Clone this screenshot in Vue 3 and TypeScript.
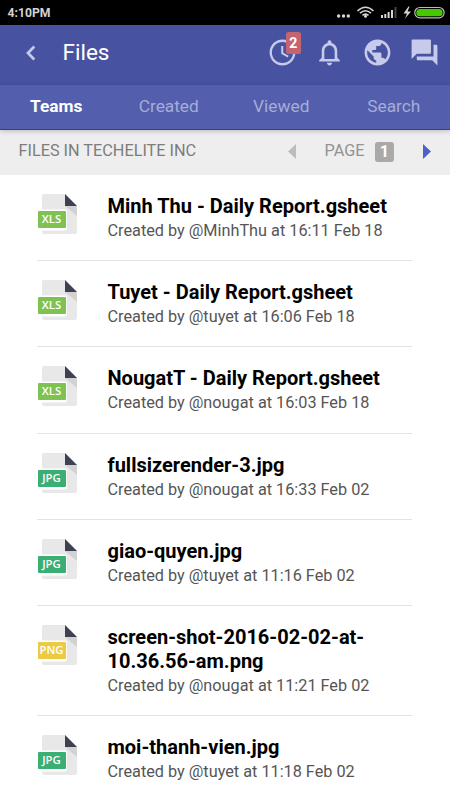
<script setup lang="ts">
interface FileItem {
  name: string
  user: string
  time: string
  type: 'xls' | 'jpg' | 'png'
}

const tabs: string[] = ['Teams', 'Created', 'Viewed', 'Search']
const activeTab = 'Teams'

const files: FileItem[] = [
  { name: 'Minh Thu - Daily Report.gsheet', user: 'MinhThu', time: '16:11 Feb 18', type: 'xls' },
  { name: 'Tuyet - Daily Report.gsheet', user: 'tuyet', time: '16:06 Feb 18', type: 'xls' },
  { name: 'NougatT - Daily Report.gsheet', user: 'nougat', time: '16:03 Feb 18', type: 'xls' },
  { name: 'fullsizerender-3.jpg', user: 'nougat', time: '16:33 Feb 02', type: 'jpg' },
  { name: 'giao-quyen.jpg', user: 'tuyet', time: '11:16 Feb 02', type: 'jpg' },
  { name: 'screen-shot-2016-02-02-at-10.36.56-am.png', user: 'nougat', time: '11:21 Feb 02', type: 'png' },
  { name: 'moi-thanh-vien.jpg', user: 'tuyet', time: '11:18 Feb 02', type: 'jpg' },
]
</script>

<template>
  <div class="screen">
    <div class="status">
      <span class="clock">4:10PM</span>
      <svg class="status-icons" viewBox="0 0 114 25" fill="#d6d6d6">
        <circle cx="2.600" cy="16" r="1.700" />
        <circle cx="7.500" cy="16" r="1.700" />
        <circle cx="12.300" cy="16" r="1.700" />
        <g fill="none" stroke="#d6d6d6" stroke-width="1.600">
          <path d="M21.500 11Q29.500 3.500 37.500 11" />
          <path d="M24 13.200Q29.500 8.300 35 13.200" />
          <path d="M26.500 15.400Q29.500 12.800 32.500 15.400" />
        </g>
        <circle cx="29.500" cy="16.300" r="1.500" />
        <path d="M45 15h2v3h-2zM48.300 14h2v4h-2zM51.600 12h2v6h-2zM55 10h2v8h-2z" />
        <path d="M58.500 7h2v11h-2z" fill="#444" />
        <path d="M72.500 6.500 67.500 13.500H71L69 18.500 75 11.500H71.500L73.500 6.500z" />
        <rect x="78.800" y="7.500" width="29.300" height="10.300" rx="5.100" fill="#050505" stroke="#bbb" stroke-width="1.200" />
        <rect x="80.300" y="9" width="26.300" height="7.300" rx="3.600" fill="#48c800" />
      </svg>
    </div>

    <header class="header">
      <svg class="back" viewBox="0 0 12 18"><path d="M9.300 2.500 3 9 9.300 15.500" /></svg>
      <h1>Files</h1>
      <nav class="actions">
        <span class="action clock-action">
          <svg viewBox="0 0 24 24"><path d="M11.990 2C6.470 2 2 6.480 2 12s4.470 10 9.990 10C17.520 22 22 17.520 22 12S17.520 2 11.990 2zM12 20.200c-4.530 0-8.200-3.670-8.200-8.200S7.470 3.800 12 3.800s8.200 3.670 8.200 8.200-3.670 8.200-8.200 8.200zM12.600 7H11v5.900l5 3 .8-1.300-4.200-2.500z" /></svg>
          <b class="badge">2</b>
        </span>
        <svg class="action" viewBox="0 0 24 24"><path d="M12 22c1.100 0 2-.9 2-2h-4c0 1.100.9 2 2 2zm6-6v-5c0-3.070-1.630-5.640-4.500-6.320V4c0-.83-.67-1.500-1.500-1.500s-1.500.67-1.500 1.500v.68C7.640 5.360 6 7.920 6 11v5l-2 2v1h16v-1l-2-2zm-2 1H8v-6c0-2.480 1.510-4.500 4-4.500s4 2.020 4 4.500v6z" /></svg>
        <svg class="action" viewBox="0 0 24 24"><path d="M12 2C6.480 2 2 6.480 2 12s4.480 10 10 10 10-4.480 10-10S17.520 2 12 2zm-1 17.930c-3.950-.49-7-3.850-7-7.930 0-.62.080-1.210.210-1.790L9 15v1c0 1.100.9 2 2 2v1.930zm6.900-2.540c-.26-.81-1-1.390-1.900-1.390h-1v-3c0-.55-.45-1-1-1H8v-2h2c.55 0 1-.45 1-1V7h2c1.100 0 2-.9 2-2v-.41c2.930 1.190 5 4.060 5 7.410 0 2.080-.8 3.970-2.100 5.390z" /></svg>
        <svg class="action" viewBox="0 0 24 24"><path d="M21 6h-2v9H6v2c0 .55.45 1 1 1h11l4 4V7c0-.55-.45-1-1-1zm-4 6V3c0-.55-.45-1-1-1H3c-.55 0-1 .45-1 1v14l4-4h10c.55 0 1-.45 1-1z" /></svg>
      </nav>
    </header>

    <nav class="tabs">
      <span v-for="tab in tabs" :key="tab" class="tab" :class="{ active: tab === activeTab }">{{ tab }}</span>
    </nav>

    <div class="subbar">
      <span class="group">FILES IN TECHELITE INC</span>
      <svg class="arrow prev" viewBox="0 0 8 15"><path d="M8 0v15L0 7.500z" /></svg>
      <span class="page">PAGE</span>
      <b class="page-number">1</b>
      <svg class="arrow next" viewBox="0 0 8 15"><path d="M0 0v15l8-7.500z" /></svg>
    </div>

    <main class="list">
      <article v-for="file in files" :key="file.name" class="row">
        <div class="file-icon" :class="file.type">
          <svg viewBox="0 0 41 40">
            <path d="M7 0H28L40 12V38a2 2 0 0 1-2 2H7a2 2 0 0 1-2-2V2a2 2 0 0 1 2-2z" fill="#e8e8e8" />
            <path d="M28 12H40V22z" fill="#d2d2d3" />
            <path d="M28 0 40 12H28z" fill="#3d4152" />
            <path d="M5 15.500H28a2 2 0 0 1 2 2V34.500a2 2 0 0 1-2 2H5z" fill="#fff" />
          </svg>
          <span class="file-label">{{ file.type.toUpperCase() }}</span>
        </div>
        <div class="info">
          <h2>{{ file.name }}</h2>
          <p>Created by @{{ file.user }} at {{ file.time }}</p>
        </div>
      </article>
    </main>
  </div>
</template>

<style>
body {
  margin: 0;
  overflow: hidden;
}
</style>

<style scoped>
.screen {
  width: 450px;
  height: 800px;
  overflow: hidden;
  display: flex;
  flex-direction: column;
  background: #fff;
  font-family: Roboto, sans-serif;
}
.status {
  height: 25px;
  flex: none;
  box-sizing: border-box;
  padding-left: 7.5px;
  display: flex;
  align-items: center;
  justify-content: space-between;
  background: #000;
}
.clock {
  color: #d3d3d3;
  font-size: 12.2px;
  font-weight: 700;
}
.status-icons {
  width: 114px;
  height: 25px;
}
.header {
  height: 60px;
  flex: none;
  box-sizing: border-box;
  padding: 0 10px 5px 25px;
  display: flex;
  align-items: center;
  background: #4753a1;
}
.back {
  width: 12px;
  height: 18px;
  fill: none;
  stroke: #c6caea;
  stroke-width: 2.7;
}
h1 {
  flex: 1;
  margin: 0 0 0 25.5px;
  color: #fff;
  font-size: 22.5px;
  font-weight: 400;
  line-height: 27px;
}
.actions {
  display: flex;
  gap: 16.4px;
}
.action {
  width: 31px;
  height: 31px;
  fill: #c7caea;
  position: relative;
}
.action svg {
  display: block;
  width: 31px;
  height: 31px;
}
.badge {
  position: absolute;
  left: 19px;
  top: -5px;
  width: 15px;
  height: 22px;
  border-radius: 2.5px;
  background: #c5646f;
  color: #fff;
  font-size: 14px;
  line-height: 22px;
  text-align: center;
}
.tabs {
  height: 45px;
  flex: none;
  box-sizing: border-box;
  display: grid;
  grid-template-columns: repeat(4, 112.5px);
  align-items: center;
  padding-bottom: 2px;
  background: #535fad;
  border-bottom: 1px solid #2f3f9d;
  box-shadow: 0 1px 5px rgba(0, 0, 0, 0.22);
  position: relative;
  z-index: 1;
}
.tab {
  text-align: center;
  color: #a6acd7;
  font-size: 17.3px;
}
.tab.active {
  color: #fff;
  font-weight: 700;
}
.subbar {
  height: 45px;
  flex: none;
  box-sizing: border-box;
  padding: 0 19.5px 4px 18.5px;
  display: flex;
  align-items: center;
  background: #eee;
  color: #7d7d7d;
  font-size: 16.25px;
}
.group {
  flex: 1;
}
.arrow {
  width: 8px;
  height: 15px;
  position: relative;
  top: 1px;
}
.prev {
  fill: #bcbcbc;
}
.next {
  fill: #4f60c8;
}
.page {
  margin-left: 28.5px;
  color: #929292;
}
.page-number {
  width: 19px;
  height: 20px;
  margin: 2px 28.5px 0 10.5px;
  border-radius: 3px;
  background: #a9a9a9;
  color: #fff;
  line-height: 20px;
  text-align: center;
}
.list {
  padding: 0 38px 0 37px;
}
.row {
  display: flex;
  padding: 19px 0 18.2px;
  border-bottom: 1px solid #e3e3e3;
}
.file-icon {
  width: 41px;
  height: 40px;
  flex: none;
  position: relative;
}
.file-icon svg {
  display: block;
  width: 41px;
  height: 40px;
}
.file-label {
  position: absolute;
  left: 0.5px;
  top: 17px;
  width: 28px;
  height: 17px;
  border-radius: 1px;
  color: #fff;
  font: 600 11.3px/16px "Open Sans", sans-serif;
  text-align: center;
}
.xls .file-label {
  background: #7fc251;
}
.jpg .file-label {
  background: #3bae74;
}
.png .file-label {
  background: #ebca44;
}
.info {
  flex: 1;
  margin-left: 29.5px;
}
h2 {
  margin: 0;
  color: #000;
  font-size: 20px;
  font-weight: 700;
  line-height: 24px;
}
p {
  margin: 1px 0 -1px;
  color: #555;
  font-size: 16.25px;
  font-weight: 400;
  line-height: 24px;
}
</style>
